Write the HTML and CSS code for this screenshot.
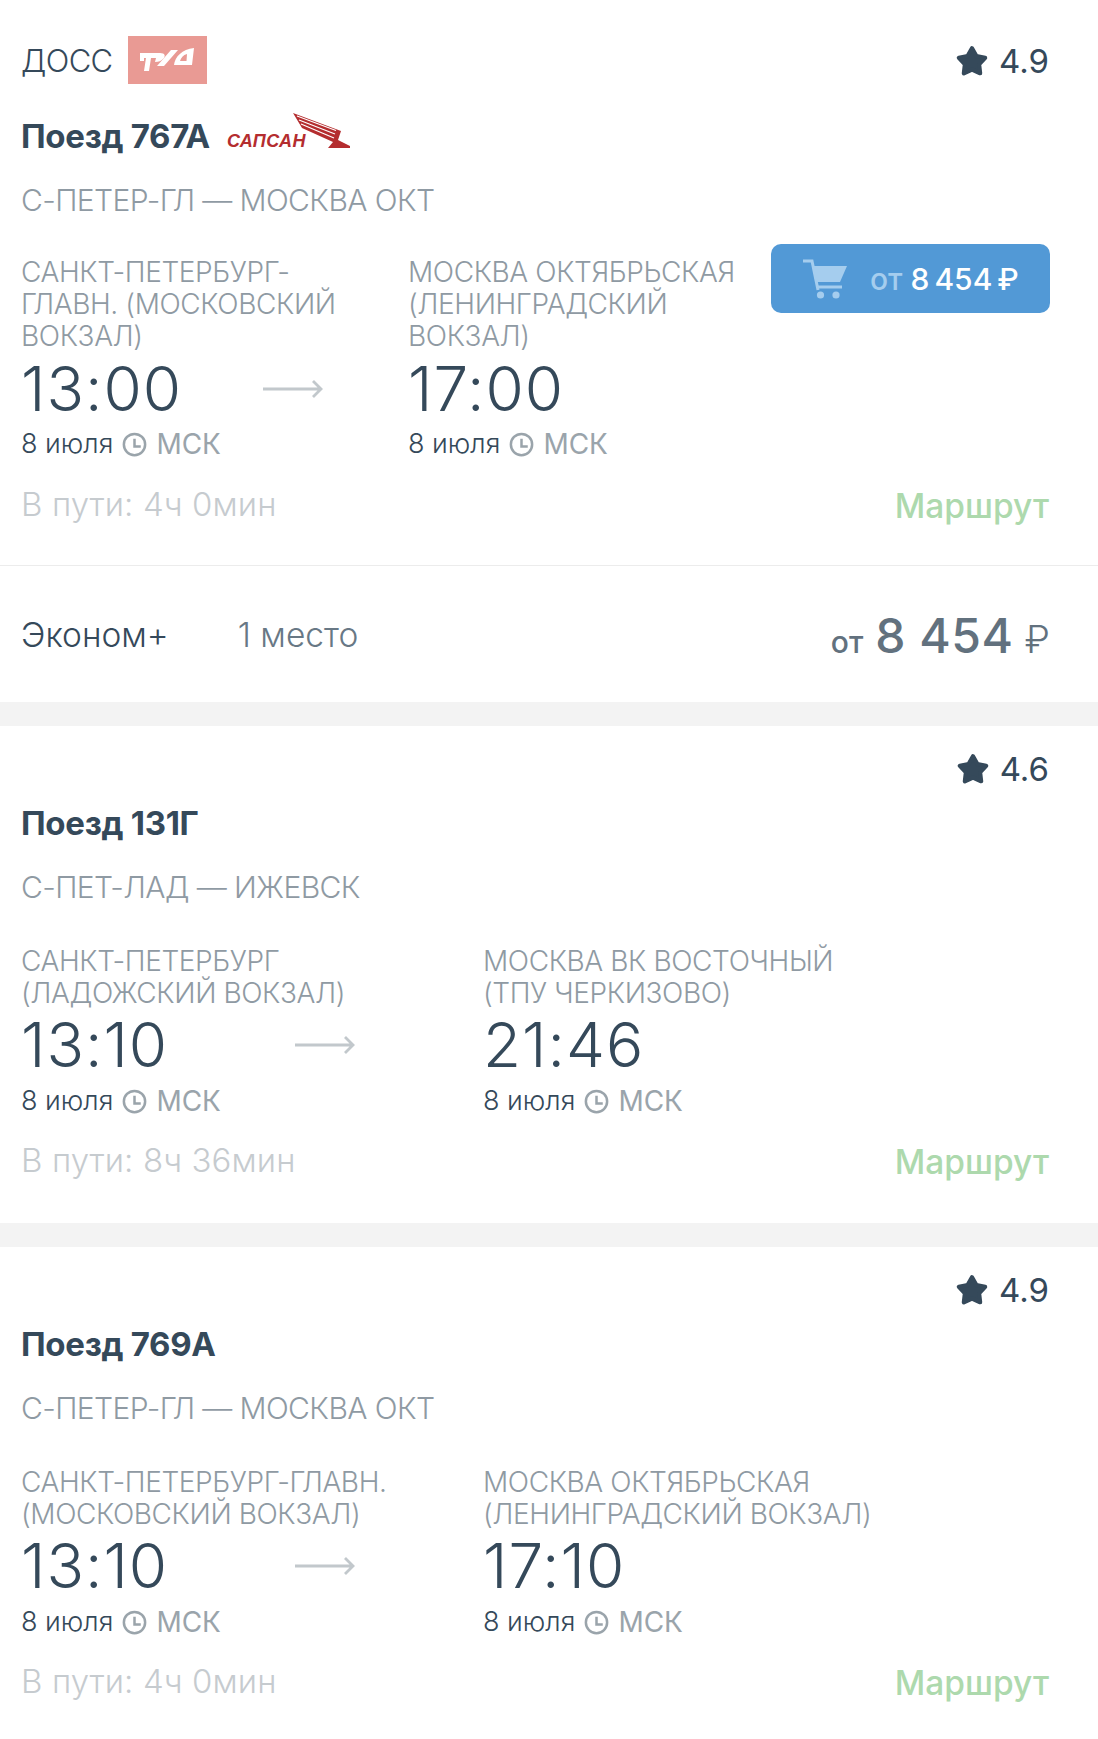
FILE: index.html
```html
<!DOCTYPE html>
<html lang="ru">
<head>
    <meta charset="UTF-8">
    <meta name="viewport" content="width=device-width, initial-scale=1.0">
    <title>Поезда</title>
    <link rel="stylesheet" href="styles.css">
</head>
<body>
    <svg class="defs" width="0" height="0" aria-hidden="true">
        <symbol id="star" viewBox="0 0 32 32">
            <polygon points="16,4 20.11,11.34 28.36,12.98 22.66,19.16 23.64,27.52 16,24 8.36,27.52 9.34,19.16 3.64,12.98 11.89,11.34" fill="#35495a" stroke="#35495a" stroke-width="4" stroke-linejoin="round"/>
        </symbol>
        <symbol id="clock" viewBox="0 0 24 24">
            <circle cx="12" cy="12" r="10.2" fill="none" stroke="#9aa4ab" stroke-width="2.4"/>
            <path d="M12 6.500V14H18" fill="none" stroke="#9aa4ab" stroke-width="2.4"/>
        </symbol>
        <symbol id="arrow" viewBox="0 0 60 20">
            <path d="M0 10H58M50 2L58 10L50 18" fill="none" stroke="#c2c8cc" stroke-width="2.8"/>
        </symbol>
    </svg>

    <!-- first train -->
    <section class="card">
        <div class="carrier-row">
            <div class="carrier">
                <span class="carrier-name">ДОСС</span>
                <div class="rzd-badge">
                    <svg width="54" height="24" viewBox="0 0 54 24">
                        <path d="M0 5H20C25 5 26 8 23 11C21 13 19 14 15 14L16 10H11L9 23H4L6 10H4V13H0Z" fill="#fff"/>
                        <path d="M17 18L31 2H38L24 18Z" fill="#fff"/>
                        <path d="M54 0L52 17H34C35 9 42 1 54 0ZM47 6C43 7 41 10 40 13H46.500Z" fill="#fff" fill-rule="evenodd"/>
                    </svg>
                </div>
            </div>
            <div class="rating">
                <svg class="star"><use href="#star"/></svg>
                <span>4.9</span>
            </div>
        </div>
        <div class="title-row">
            <h2 class="train-name">Поезд 767А</h2>
            <div class="sapsan">
                <span class="sapsan-text">САПСАН</span>
                <svg class="sapsan-wing" width="57" height="36" viewBox="0 0 57 36">
                    <path d="M0 0L48 18L45 27L57 33V35H35L40 29L9 15Z" fill="#b42d2f"/>
                    <path d="M4 3L43 17.500M6 7L42 21M8 11L41 25" stroke="#fff" stroke-width="1.200" fill="none"/>
                </svg>
            </div>
        </div>
        <div class="route">С-ПЕТЕР-ГЛ — МОСКВА ОКТ</div>

        <div class="trip">
            <div class="stops">
                <div class="stop stop-from">
                    <div class="station">САНКТ-ПЕТЕРБУРГ-<br>ГЛАВН. (МОСКОВСКИЙ<br>ВОКЗАЛ)</div>
                    <div class="time-row">
                        <span class="time">13:00</span>
                        <svg class="arrow"><use href="#arrow"/></svg>
                    </div>
                    <div class="date">8 июля <svg class="clock"><use href="#clock"/></svg> <span class="zone">МСК</span></div>
                </div>
                <div class="stop">
                    <div class="station">МОСКВА ОКТЯБРЬСКАЯ<br>(ЛЕНИНГРАДСКИЙ<br>ВОКЗАЛ)</div>
                    <div class="time-row"><span class="time">17:00</span></div>
                    <div class="date">8 июля <svg class="clock"><use href="#clock"/></svg> <span class="zone">МСК</span></div>
                </div>
            </div>
            <button class="buy">
                <svg class="cart" width="47" height="40" viewBox="0 0 47 40">
                    <path d="M2 2H11L17 31" fill="none" stroke="#a5cdee" stroke-width="3"/>
                    <path d="M12 7H46L39 23H15Z" fill="#a5cdee"/>
                    <path d="M16 28H41" stroke="#a5cdee" stroke-width="3"/>
                    <circle cx="19.500" cy="36" r="3.600" fill="#a5cdee"/>
                    <circle cx="35" cy="36" r="3.600" fill="#a5cdee"/>
                </svg>
                <span class="buy-from">от</span>
                <span class="buy-price">8 454 ₽</span>
            </button>
        </div>
        <div class="footer-row">
            <span class="duration">В пути: 4ч 0мин</span>
            <a class="route-link">Маршрут</a>
        </div>
    </section>
    <div class="class-row">
        <div class="class-info">
            <span class="class-name">Эконом+</span>
            <span class="seats">1 место</span>
        </div>
        <div class="price">
            <span class="price-from">от</span>
            <span class="price-value">8 454</span>
            <span class="price-cur">₽</span>
        </div>
    </div>

    <!-- second train -->
    <section class="card card-plain">
        <div class="rating-row">
            <div class="rating">
                <svg class="star"><use href="#star"/></svg>
                <span>4.6</span>
            </div>
        </div>
        <div class="title-row">
            <h2 class="train-name">Поезд 131Г</h2>
        </div>
        <div class="route">С-ПЕТ-ЛАД — ИЖЕВСК</div>
        <div class="trip">
            <div class="stops">
                <div class="stop stop-from">
                    <div class="station">САНКТ-ПЕТЕРБУРГ<br>(ЛАДОЖСКИЙ ВОКЗАЛ)</div>
                    <div class="time-row">
                        <span class="time">13:10</span>
                        <svg class="arrow"><use href="#arrow"/></svg>
                    </div>
                    <div class="date">8 июля <svg class="clock"><use href="#clock"/></svg> <span class="zone">МСК</span></div>
                </div>
                <div class="stop">
                    <div class="station">МОСКВА ВК ВОСТОЧНЫЙ<br>(ТПУ ЧЕРКИЗОВО)</div>
                    <div class="time-row"><span class="time">21:46</span></div>
                    <div class="date">8 июля <svg class="clock"><use href="#clock"/></svg> <span class="zone">МСК</span></div>
                </div>
            </div>
        </div>
        <div class="footer-row">
            <span class="duration">В пути: 8ч 36мин</span>
            <a class="route-link">Маршрут</a>
        </div>
    </section>

    <!-- third train -->
    <section class="card card-plain">
        <div class="rating-row">
            <div class="rating">
                <svg class="star"><use href="#star"/></svg>
                <span>4.9</span>
            </div>
        </div>
        <div class="title-row">
            <h2 class="train-name">Поезд 769А</h2>
        </div>
        <div class="route">С-ПЕТЕР-ГЛ — МОСКВА ОКТ</div>
        <div class="trip">
            <div class="stops">
                <div class="stop stop-from">
                    <div class="station">САНКТ-ПЕТЕРБУРГ-ГЛАВН.<br>(МОСКОВСКИЙ ВОКЗАЛ)</div>
                    <div class="time-row">
                        <span class="time">13:10</span>
                        <svg class="arrow"><use href="#arrow"/></svg>
                    </div>
                    <div class="date">8 июля <svg class="clock"><use href="#clock"/></svg> <span class="zone">МСК</span></div>
                </div>
                <div class="stop">
                    <div class="station">МОСКВА ОКТЯБРЬСКАЯ<br>(ЛЕНИНГРАДСКИЙ ВОКЗАЛ)</div>
                    <div class="time-row"><span class="time">17:10</span></div>
                    <div class="date">8 июля <svg class="clock"><use href="#clock"/></svg> <span class="zone">МСК</span></div>
                </div>
            </div>
        </div>
        <div class="footer-row">
            <span class="duration">В пути: 4ч 0мин</span>
            <a class="route-link">Маршрут</a>
        </div>
    </section>
</body>
</html>
```

FILE: styles.css
```css
* { box-sizing: border-box; }
body {
    margin: 0;
    background: #fff;
    color: #35495a;
    font-family: 'Inter', 'Noto Sans', sans-serif;
}
.defs { position: absolute; }

.card {
    padding: 36px 48px 41px 21px;
    border-bottom: 1px solid #ececec;
}
.card-plain {
    padding-top: 23px;
    padding-bottom: 43px;
    border-top: 24px solid #f3f3f3;
    border-bottom: none;
}

.carrier-row { display: flex; justify-content: space-between; align-items: center; height: 48px; }
.carrier { display: flex; align-items: center; gap: 15px; }
.carrier-name { font-size: 31px; font-weight: 300; letter-spacing: -0.6px; }
.rzd-badge {
    width: 79px;
    height: 48px;
    background: #e99a94;
    display: flex;
    align-items: center;
    justify-content: center;
}
.carrier-row .rating { padding-top: 2px; }

.rating-row { display: flex; justify-content: flex-end; height: 40px; align-items: center; }
.rating { display: flex; align-items: center; gap: 10px; margin-right: 1px; font-size: 33px; line-height: 40px; }
.star { width: 34px; height: 34px; }

.title-row { display: flex; align-items: center; height: 40px; margin-top: 14px; }
.carrier-row + .title-row { margin-top: 32px; }
.train-name { margin: 0; font-size: 33px; font-weight: 700; line-height: 40px; letter-spacing: -0.3px; }
.sapsan { position: relative; width: 123px; height: 36px; margin-left: 17px; }
.sapsan-text {
    position: absolute;
    left: 0;
    bottom: 4px;
    color: #b42d2f;
    font: italic 700 18px 'Liberation Sans', sans-serif;
    line-height: 18px;
    letter-spacing: 0.4px;
}
.sapsan-wing { position: absolute; right: 0; top: -5px; }

.route { margin-top: 24px; font-size: 30px; line-height: 40px; font-weight: 300; letter-spacing: -0.6px; color: #8f9aa3; }

.trip { display: flex; justify-content: space-between; margin-top: 36px; }
.card-plain .trip { margin-top: 38px; }
.stops { display: flex; }
.stop-from { width: 387px; }
.card-plain .stop-from { width: 462px; }
.station { font-size: 28px; line-height: 32px; font-weight: 300; letter-spacing: -0.4px; color: #8f9aa3; }
.time-row { display: flex; align-items: center; height: 72px; padding-top: 2px; }
.card-plain .time-row { padding-top: 0; }
.time { font-size: 62px; font-weight: 350; line-height: 72px; letter-spacing: 1px; }
.stop-from .time { width: 242px; }
.card-plain .stop-from .time { width: 274px; }
.arrow { width: 60px; height: 20px; }
.date { display: flex; align-items: center; gap: 9px; font-size: 27px; font-weight: 350; line-height: 40px; color: #35495a; }
.clock { width: 25px; height: 25px; }
.zone { font-size: 28px; font-weight: 400; color: #9aa4ab; }

.buy {
    display: flex;
    align-items: center;
    width: 279px;
    height: 69px;
    margin-top: -12px;
    padding: 0 0 0 30px;
    border: none;
    border-radius: 10px;
    background: #5299d6;
    font-family: inherit;
    font-size: 30px;
    font-weight: 500;
}
.cart { margin-right: 22px; }
.buy-from { color: #a5cdee; margin-right: 8px; }
.buy-price { color: #fff; word-spacing: -3px; }

.footer-row { display: flex; justify-content: space-between; align-items: center; height: 40px; margin-top: 20px; }
.card-plain .footer-row { margin-top: 19px; }
.duration { font-size: 33px; font-weight: 300; letter-spacing: 0.1px; color: #c6cbcf; }
.route-link { margin-right: 1px; padding-top: 4px; font-size: 33.500px; font-weight: 500; color: #add9ad; }

.class-row {
    display: flex;
    justify-content: space-between;
    align-items: center;
    height: 136px;
    padding: 2px 48px 0 21px;
}
.class-info { display: flex; gap: 69px; font-size: 33.500px; font-weight: 300; }
.seats { color: #687885; }
.price { display: flex; align-items: baseline; color: #62717e; }
.price-from { font-size: 30px; font-weight: 500; margin-right: 12px; }
.price-value { font-size: 48px; font-weight: 450; letter-spacing: 0.5px; margin-right: 11px; }
.price-cur { font-size: 38px; font-weight: 300; }
```
